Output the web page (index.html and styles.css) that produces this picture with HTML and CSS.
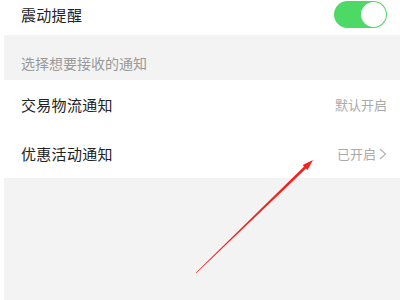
FILE: index.html
```html
<!DOCTYPE html>
<html lang="zh-CN">
<head>
    <meta charset="UTF-8">
    <meta name="viewport" content="width=device-width, initial-scale=1.0">
    <title>通知设置</title>
    <link rel="stylesheet" href="styles.css">
</head>
<body>
    <div class="settings">
        <div class="row row-top">
            <span class="label">震动提醒</span>
            <div class="switch on"><div class="knob"></div></div>
        </div>
        <div class="section-title">选择想要接收的通知</div>
        <div class="row">
            <span class="label">交易物流通知</span>
            <span class="value">默认开启</span>
        </div>
        <div class="row">
            <span class="label">优惠活动通知</span>
            <span class="value">已开启
                <svg class="chevron" width="8" height="12" viewBox="0 0 8 12"><polyline points="1,1 6.5,6 1,11" fill="none" stroke="#b5b5b5" stroke-width="1.2"/></svg>
            </span>
        </div>
        <div class="filler"></div>

        <!-- annotation arrow -->
        <svg class="arrow" width="400" height="300" viewBox="0 0 400 300">
            <polygon fill="#f2231d" points="196.2,273.2 306.1,168.6 307.5,170 313,160 302.7,165 304.1,166.4 195.8,272.8"/>
        </svg>
    </div>
</body>
</html>
```

FILE: styles.css
```css
body {
    margin: 0;
    padding: 0;
    background: #fff;
    font-family: "Noto Sans CJK SC", "Noto Sans", sans-serif;
}
.settings {
    position: relative;
    width: 400px;
    height: 300px;
    overflow: hidden;
    padding-left: 4px;
    box-sizing: border-box;
    display: flex;
    flex-direction: column;
}
.row {
    height: 49px;
    display: flex;
    align-items: center;
    justify-content: space-between;
    padding: 0 13px 0 17px;
    background: #fff;
}
.row-top {
    height: 28px;
    padding-bottom: 7px;
}
.label {
    font-size: 15px;
    color: #222;
    letter-spacing: 0.3px;
}
.value {
    font-size: 13px;
    color: #aaa;
    display: flex;
    align-items: center;
    gap: 2px;
}
.chevron {
    margin-left: 1px;
}
.section-title {
    height: 45px;
    box-sizing: border-box;
    background: #f3f3f3;
    padding: 18px 0 0 17px;
    font-size: 14px;
    line-height: 20px;
    color: #999;
}
.switch {
    width: 53px;
    height: 27px;
    border-radius: 14px;
    background: #4cd964;
    position: relative;
    box-sizing: border-box;
}
.switch .knob {
    position: absolute;
    right: 1px;
    top: 1px;
    width: 25px;
    height: 25px;
    border-radius: 50%;
    background: #fff;
}
.filler {
    flex: 1;
    background: #f3f3f3;
}
.arrow {
    position: absolute;
    left: 0;
    top: 0;
}
```
